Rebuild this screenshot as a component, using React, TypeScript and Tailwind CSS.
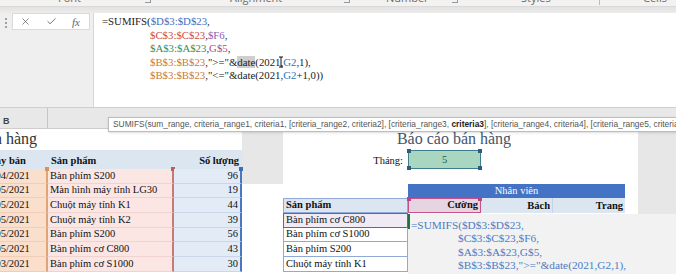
import type { ReactNode } from 'react'
import { X, Check } from 'lucide-react'

const leftRows = [
  ['15/04/2021', 'Bàn phím S200', '96'],
  ['03/05/2021', 'Màn hình máy tính LG30', '19'],
  ['05/05/2021', 'Chuột máy tính K1', '44'],
  ['09/05/2021', 'Chuột máy tính K2', '39'],
  ['12/05/2021', 'Bàn phím S200', '56'],
  ['18/05/2021', 'Bàn phím cơ C800', '43'],
  ['21/03/2021', 'Bàn phím cơ S1000', '30'],
]

const products = ['Bàn phím cơ C800', 'Bàn phím cơ S1000', 'Bàn phím S200', 'Chuột máy tính K1']

function Handle({ className }: { className: string }) {
  return <span className={`absolute w-[4px] h-[4px] ${className}`} />
}

function LeftRow({ date, name, qty, first }: { date: string; name: string; qty: string; first?: boolean }) {
  return (
    <div className="flex w-[242px] h-full">
      <div className="relative w-[48px] overflow-hidden whitespace-nowrap bg-[#fadfcd] border-r-2 border-b border-r-[#e0a476] border-b-[#f1cdb5] flex items-end pb-[1px]">
        <span className="-ml-[18px]">{date}</span>
      </div>
      <div className="relative w-[126px] whitespace-nowrap bg-[#fce6e4] border-r-2 border-b border-r-[#c97a76] border-b-[#f0d2cf] flex items-end pb-[1px] pl-[2px]">
        {name}
        {first && <Handle className="-top-[2px] -left-[3px] bg-[#d8925c]" />}
        {first && <Handle className="-top-[2px] -right-[3px] bg-[#b8605b]" />}
      </div>
      <div className="relative w-[68px] bg-[#e3ebf7] border-r-2 border-b border-r-[#4a78c0] border-b-[#cad6ea] flex items-end justify-end pb-[1px] pr-[2px]">
        {qty}
        {first && <Handle className="-top-[2px] -right-[3px] bg-[#3d6cb4]" />}
      </div>
    </div>
  )
}

function Row({ h, left, gapGray, right, sideGray = true }: { h: string; left: ReactNode; gapGray?: boolean; right: ReactNode; sideGray?: boolean }) {
  return (
    <div className={`flex ${h}`}>
      {left}
      <div className={`w-[41px] ${gapGray ? 'bg-[#e7e7e7]' : 'bg-white'}`} />
      <div className="flex w-[342px]">{right}</div>
      <div className="w-[13px] bg-white" />
      <div className={`w-[38px] ${sideGray ? 'bg-[#e7e7e7]' : 'bg-white'}`} />
    </div>
  )
}

function ProductCell({ name, active }: { name: string; active?: boolean }) {
  return (
    <div
      className={`w-[125px] whitespace-nowrap flex items-end pb-[1px] pl-[2px] border ${
        active ? 'border-[#7a55a8] bg-[#efeaf4]' : 'border-[#8faad6] border-t-0 bg-white'
      }`}
    >
      {name}
    </div>
  )
}

export default function App() {
  const serif = "font-['Liberation_Serif',serif]"
  return (
    <div className={`relative w-[676px] h-[274px] overflow-hidden bg-white ${serif} text-[10.5px] leading-[12px] text-[#111]`}>
      {/* ribbon group captions, cut off */}
      <div className="h-[7px] overflow-hidden bg-[#f3f2f1] border-b border-[#d9d9d9] font-['Open_Sans',sans-serif] text-[11px] leading-[14px] text-[#6b6b6b]">
        <div className="flex -mt-[9px]">
          <div className="w-[140px] pl-[58px]">Font</div>
          <div className="w-[90px] pl-[5px] pt-[6px]"><span className="block w-[6px] h-[6px] border-r border-b border-[#999]" /></div>
          <div className="w-[110px]">Alignment</div>
          <div className="w-[46px] pl-[4px] pt-[6px]"><span className="block w-[6px] h-[6px] border-r border-b border-[#999]" /></div>
          <div className="w-[64px]">Number</div>
          <div className="w-[71px] pl-[2px] pt-[6px]"><span className="block w-[6px] h-[6px] border-r border-b border-[#999]" /></div>
          <div className="w-[74px]">Styles</div>
          <div className="w-[48px] pl-[4px] pt-[4px]"><span className="block w-px h-[10px] bg-[#bbb]" /></div>
          <div>Cells</div>
        </div>
      </div>
      <div className="h-[6px] bg-gradient-to-b from-[#e2e2e2] to-[#ececec]" />

      {/* formula bar */}
      <div className="flex h-[95px] border-b border-[#cfcfcf]">
        <div className="flex w-[93px] bg-[#efefef]">
          <div className="w-[12px] flex flex-col items-center gap-[2px] pt-[5px]">
            <span className="w-[2px] h-[2px] bg-[#a0a0a0]" />
            <span className="w-[2px] h-[2px] bg-[#a0a0a0]" />
            <span className="w-[2px] h-[2px] bg-[#a0a0a0]" />
          </div>
          <div className="w-[78px] h-[17px] bg-white border border-[#dadada] flex items-center text-[#555]">
            <X size={11} strokeWidth={1.5} className="ml-[7px]" />
            <Check size={11} strokeWidth={1.8} className="ml-[15px]" />
            <span className="ml-[15px] italic text-[11px] text-[#666]">fx</span>
          </div>
        </div>
        <div className="flex-1 bg-white border-l border-[#d6d6d6] pl-[8px] pt-[2px] text-[10.8px] leading-[13.6px] text-[#222] whitespace-nowrap">
          <div>=SUMIFS(<span className="text-[#3e6fc0]">$D$3:$D$23</span>,</div>
          <div className="pl-[48px]"><span className="text-[#cf4a42]">$C$3:$C$23</span>,<span className="text-[#8c5cb6]">$F6</span>,</div>
          <div className="pl-[48px]"><span className="text-[#3b8d55]">$A$3:$A$23</span>,<span className="text-[#b3457f]">G$5</span>,</div>
          <div className="pl-[48px]">
            <span className="text-[#c8783a]">$B$3:$B$23</span>,"&gt;="&amp;<span className="bg-[#cfcfcf]">date</span>(2021
            <span className="relative inline-block w-0">
              <svg className="absolute -left-[2px] -top-[10px]" width="6" height="12" viewBox="0 0 6 12">
                <path d="M1 1h4M3 1v10M1 11h4" stroke="#111" strokeWidth="1" fill="none" />
              </svg>
            </span>
            ,<span className="text-[#2f74b5]">G2</span>,1),
          </div>
          <div className="pl-[48px]">
            <span className="text-[#c8783a]">$B$3:$B$23</span>,"&lt;="&amp;date(2021,<span className="text-[#2f74b5]">G2</span>+1,0))
          </div>
        </div>
      </div>

      {/* column headers */}
      <div className="flex h-[21px] bg-[#e8e8e8] border-b border-[#cdcdcd]">
        <div className="w-[48px] border-r border-[#c6c6c6] pl-[3px] pt-[7px] font-['Liberation_Sans',sans-serif] font-bold text-[9px] text-[#444]">B</div>
      </div>

      {/* sheet */}
      <Row
        h="h-[21px]"
        gapGray
        left={
          <div className="w-[242px] overflow-hidden whitespace-nowrap flex items-end pb-[2px] text-[16px] leading-[18px] text-[#333]">
            <span className="-ml-[6px]">n hàng</span>
          </div>
        }
        right={
          <div className="w-full flex items-end justify-center pb-[2px] text-[16px] leading-[18px] text-[#44546a]">Báo cáo bán hàng</div>
        }
      />
      <Row
        h="h-[19px]"
        gapGray
        left={
          <div className="flex w-[242px] bg-[#dce6f1] font-bold whitespace-nowrap">
            <div className="w-[48px] overflow-hidden flex items-end pb-[2px]"><span className="-ml-[17px]">Ngày bán</span></div>
            <div className="w-[126px] flex items-end pb-[2px] pl-[3px]">Sản phẩm</div>
            <div className="w-[68px] flex items-end justify-end pb-[2px] pr-[3px]">Số lượng</div>
          </div>
        }
        right={
          <>
            <div className="w-[125px] flex items-end justify-end pb-[2px] pr-[5px]">Tháng:</div>
            <div className="relative w-[73px] bg-[#a8d6c1] border border-[#3f7d8c] flex items-end justify-center pb-[2px] text-[#1f5a3a]">
              5
              <Handle className="-top-[2px] -left-[2px] bg-[#2b5d7c]" />
              <Handle className="-top-[2px] -right-[2px] bg-[#2b5d7c]" />
              <Handle className="-bottom-[2px] -left-[2px] bg-[#2b5d7c]" />
              <Handle className="-bottom-[2px] -right-[2px] bg-[#2b5d7c]" />
            </div>
          </>
        }
      />
      <Row h="h-[14.7px]" gapGray left={<LeftRow date={leftRows[0][0]} name={leftRows[0][1]} qty={leftRows[0][2]} first />} right={null} />
      <Row
        h="h-[14.7px]"
        left={<LeftRow date={leftRows[1][0]} name={leftRows[1][1]} qty={leftRows[1][2]} />}
        right={
          <>
            <div className="w-[125px]" />
            <div className="w-[217px] bg-[#4472c4] text-white flex items-end justify-center pb-[1px]">Nhân viên</div>
          </>
        }
      />
      <Row
        h="h-[14.7px]"
        left={<LeftRow date={leftRows[2][0]} name={leftRows[2][1]} qty={leftRows[2][2]} />}
        right={
          <div className="flex w-[342px] bg-[#dce6f1] font-bold whitespace-nowrap">
            <div className="w-[125px] border border-[#8faad6] flex items-end pb-[1px] pl-[2px]">Sản phẩm</div>
            <div className="relative w-[73px] bg-[#e7d4e1] border border-[#c4508e] flex items-end justify-end pb-[1px] pr-[2px]">
              Cường
              <Handle className="-top-[2px] -left-[2px] bg-[#b8457f]" />
              <Handle className="-top-[2px] -right-[2px] bg-[#b8457f]" />
            </div>
            <div className="w-[72px] border-r border-[#c4d3ea] flex items-end justify-end pb-[1px] pr-[2px]">Bách</div>
            <div className="w-[72px] flex items-end justify-end pb-[1px] pr-[2px]">Trang</div>
          </div>
        }
      />
      {products.map((p, i) => (
        <Row
          key={p}
          h="h-[14.7px]"
          left={<LeftRow date={leftRows[3 + i][0]} name={leftRows[3 + i][1]} qty={leftRows[3 + i][2]} />}
          right={<ProductCell name={p} active={i === 0} />}
        />
      ))}

      {/* tooltip */}
      <div className="absolute left-[108px] top-[117px] w-[800px] h-[15px] bg-white border border-[#bdbdbd] shadow-sm pl-[4px] font-['Liberation_Sans',sans-serif] text-[8.4px] leading-[13px] text-[#555] whitespace-nowrap">
        SUMIFS(sum_range, criteria_range1, criteria1, [criteria_range2, criteria2], [criteria_range3, <b className="text-[#222]">criteria3</b>], [criteria_range4, criteria4], [criteria_range5, criteria5], ...)
      </div>

      {/* in-cell formula editor */}
      <div className="absolute left-[408px] top-[214px] right-0 bottom-0 bg-[#f2f2f2] text-[11.3px] leading-[13.4px] text-[#4a7cc4] whitespace-nowrap pl-[3px] pt-[5px]">
        <span className="absolute left-0 top-0 w-[2px] h-[15px] bg-[#217346]" />
        <div>=SUMIFS($D$3:$D$23,</div>
        <div className="pl-[47px]">$C$3:$C$23,$F6,</div>
        <div className="pl-[47px]">$A$3:$A$23,G$5,</div>
        <div className="pl-[47px]">$B$3:$B$23,"&gt;="&amp;date(2021,G2,1),</div>
      </div>
    </div>
  )
}
